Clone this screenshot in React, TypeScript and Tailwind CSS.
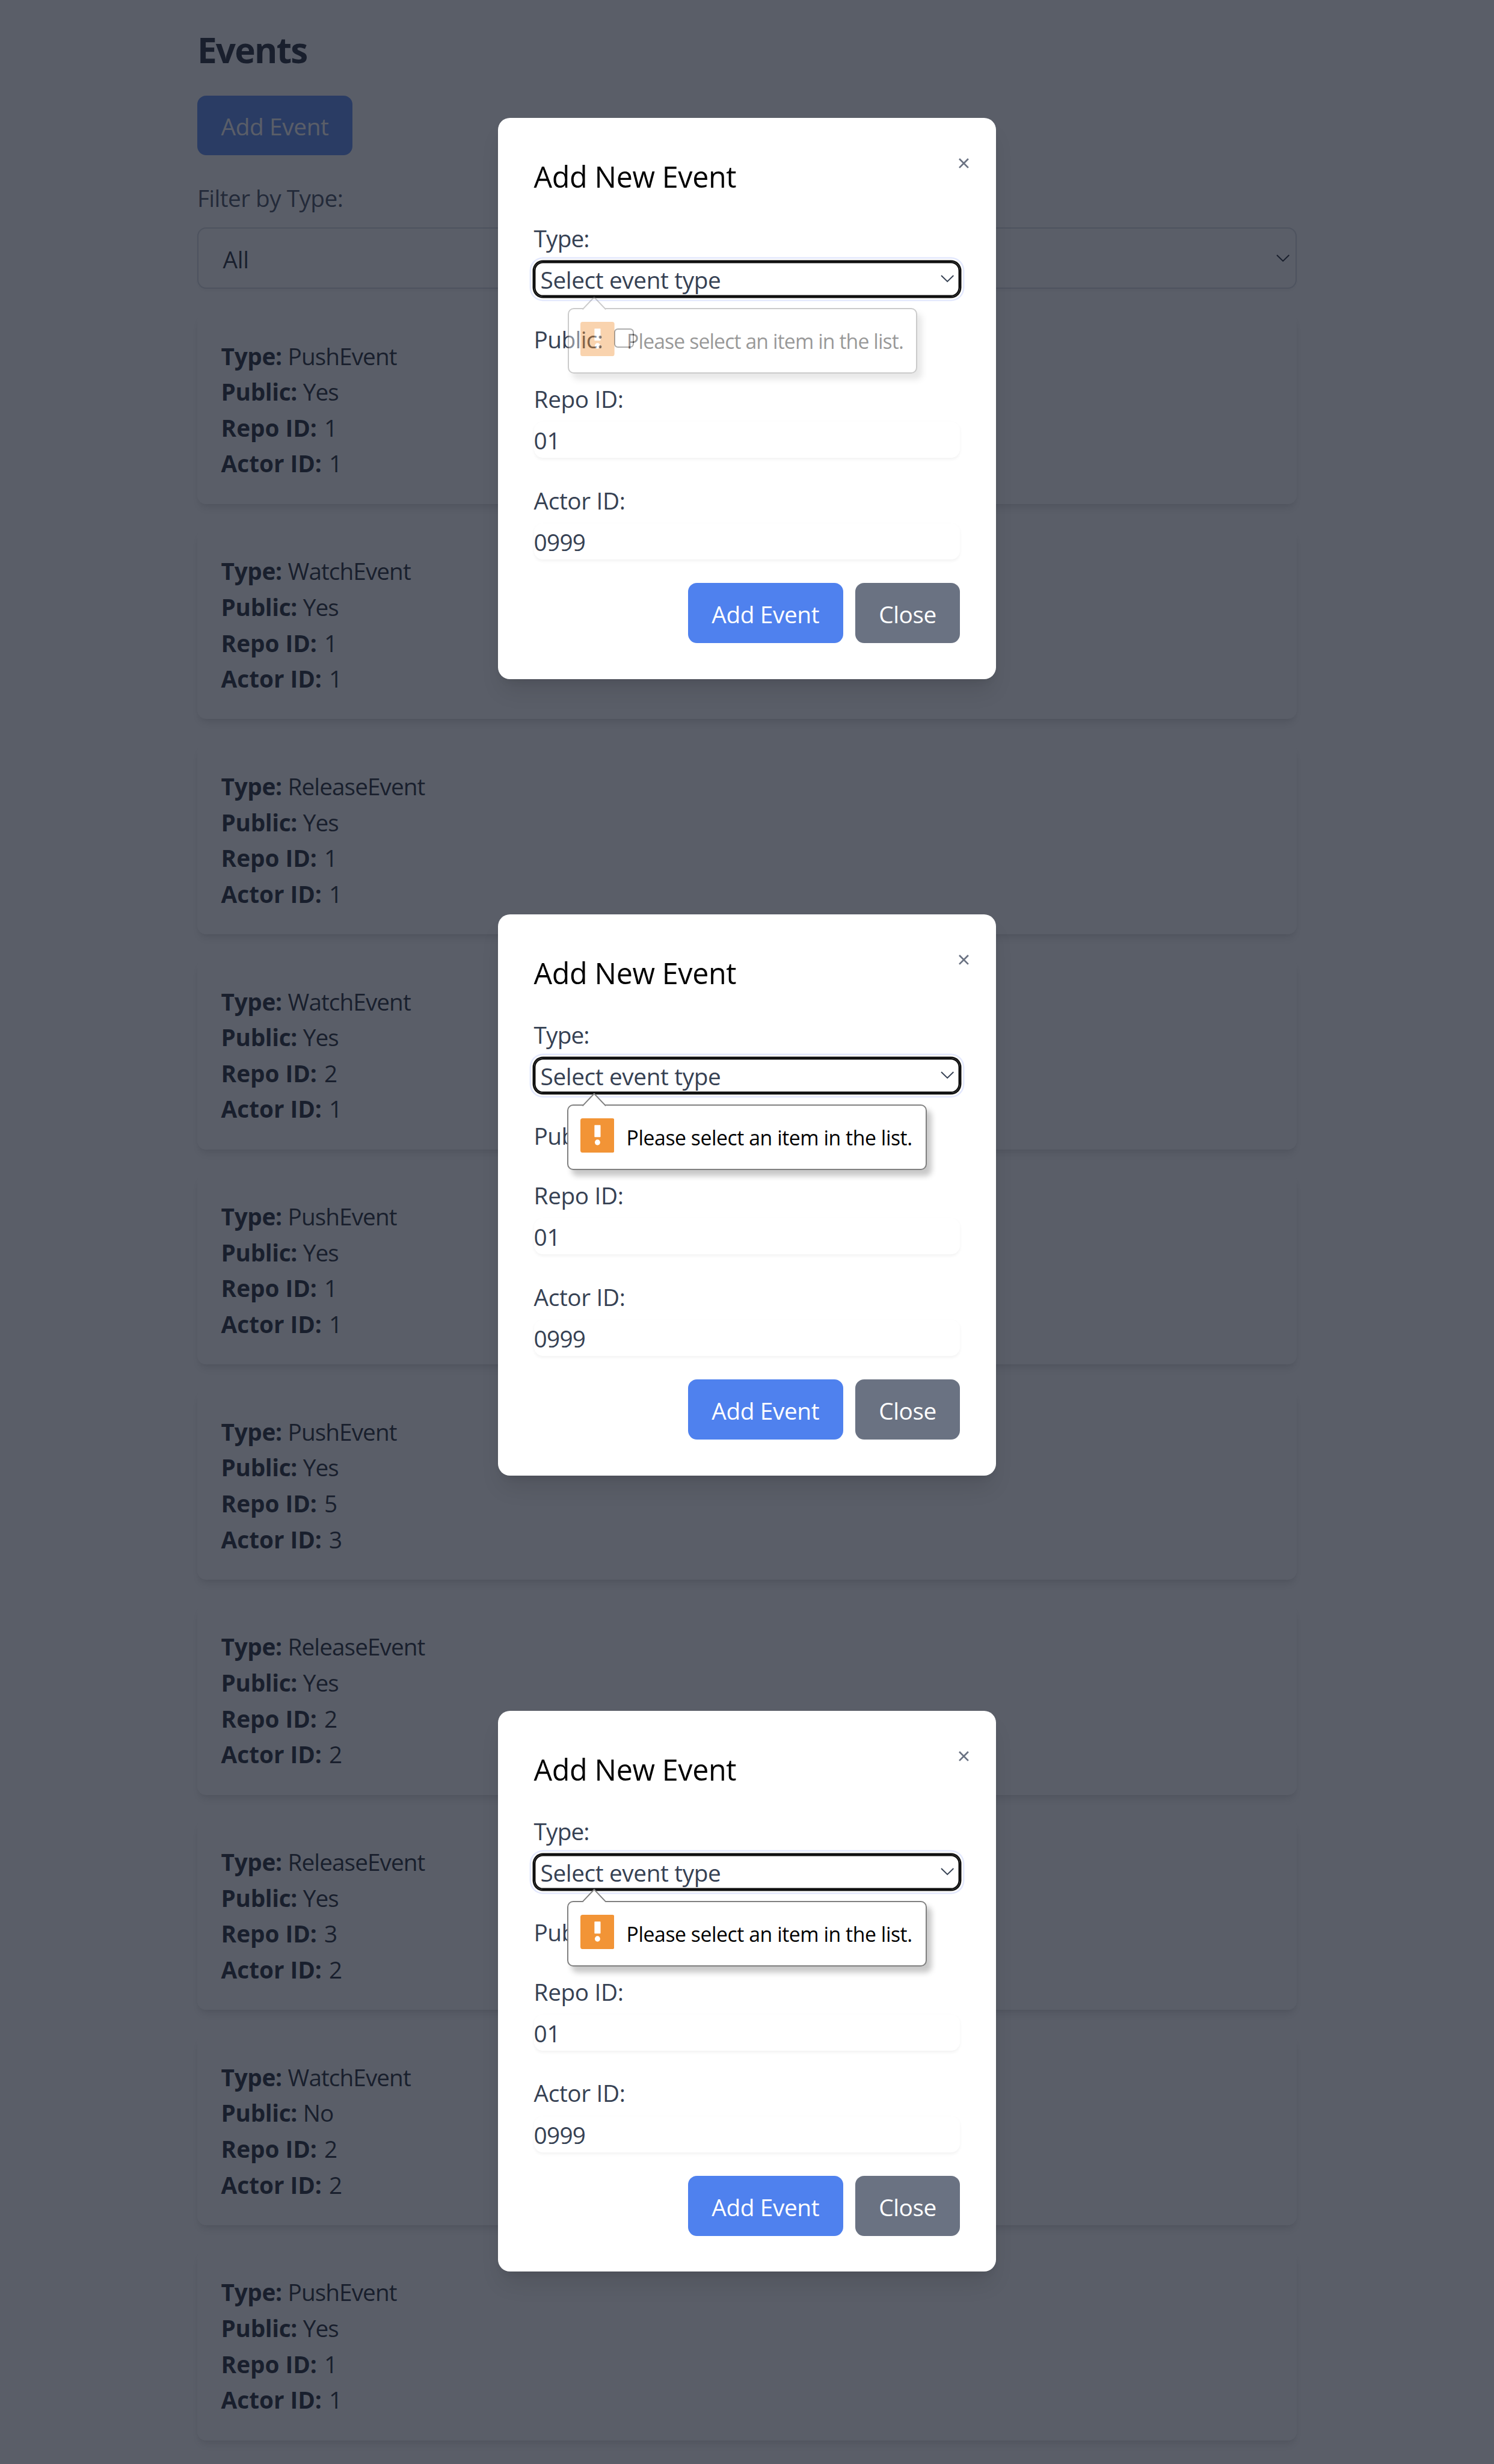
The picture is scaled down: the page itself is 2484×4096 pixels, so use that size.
type EventItem = { type: string; isPublic: boolean; repoId: number; actorId: number };

const events: EventItem[] = [
  { type: 'PushEvent', isPublic: true, repoId: 1, actorId: 1 },
  { type: 'WatchEvent', isPublic: true, repoId: 1, actorId: 1 },
  { type: 'ReleaseEvent', isPublic: true, repoId: 1, actorId: 1 },
  { type: 'WatchEvent', isPublic: true, repoId: 2, actorId: 1 },
  { type: 'PushEvent', isPublic: true, repoId: 1, actorId: 1 },
  { type: 'PushEvent', isPublic: true, repoId: 5, actorId: 3 },
  { type: 'ReleaseEvent', isPublic: true, repoId: 2, actorId: 2 },
  { type: 'ReleaseEvent', isPublic: true, repoId: 3, actorId: 2 },
  { type: 'WatchEvent', isPublic: false, repoId: 2, actorId: 2 },
  { type: 'PushEvent', isPublic: true, repoId: 1, actorId: 1 },
];

function Chevron() {
  return (
    <svg className="h-[5px] w-[9px] shrink-0" viewBox="0 0 9 5" fill="none">
      <path d="M0.4 0.4L4.5 4.4L8.6 0.4" stroke="currentColor" strokeWidth="0.8" />
    </svg>
  );
}

function Row({ label, value }: { label: string; value: string | number }) {
  const numeric = typeof value === 'number';
  return (
    <p className="h-6 leading-[25.8px] tracking-[-0.38px]">
      <strong className={numeric ? 'mr-[1.2px] font-bold tracking-[-0.02px]' : 'mr-[0.3px] font-bold tracking-[-0.15px]'}>
        {label}:
      </strong>{' '}
      {value}
    </p>
  );
}

function EventCard({ event }: { event: EventItem }) {
  return (
    <li className="rounded-md bg-white p-4 shadow-md">
      <Row label="Type" value={event.type} />
      <Row label="Public" value={event.isPublic ? 'Yes' : 'No'} />
      <Row label="Repo ID" value={event.repoId} />
      <Row label="Actor ID" value={event.actorId} />
    </li>
  );
}

// Validation bubble; `fading` is the half-transparent state with slightly tighter text.
function Bubble({ fading }: { fading: boolean }) {
  return (
    <div
      className={
        fading
          ? 'absolute left-[46.6px] top-[127.3px] w-[234px] opacity-40'
          : 'absolute left-[46.4px] top-[127.3px] w-[240.7px]'
      }
    >
      <div className="flex h-[43.6px] items-start rounded-[4px] border border-[#808080] bg-white pl-[7.8px] pt-[8.2px] shadow-[3px_4px_4px_rgba(0,0,0,0.22)]">
        <svg className="h-[23px] w-[22.8px] shrink-0" viewBox="0 0 22.8 23">
          <rect width="22.8" height="23" rx="1.5" fill="#f29436" />
          <rect x="9.4" y="4.5" width="4.1" height="8.1" rx="0.3" fill="#fff" />
          <ellipse cx="11.45" cy="16.1" rx="1.8" ry="1.9" fill="#fff" />
        </svg>
        <span
          className={
            fading
              ? 'ml-[8.2px] mt-[1.3px] whitespace-nowrap text-[13.6px] leading-[24px] tracking-[-0.36px] text-black'
              : 'ml-[8.2px] mt-[1.3px] whitespace-nowrap text-[13.6px] leading-[24px] tracking-[-0.18px] text-black'
          }
        >
          Please select an item in the list.
        </span>
      </div>
      <svg className="absolute left-[9.8px] top-[-8px] h-[9.2px] w-4" viewBox="0 0 16 9.2">
        <path d="M0 9.2L8 0.3L16 9.2Z" fill="#fff" />
        <path d="M0.2 8.6L8 0.4L15.8 8.6" fill="none" stroke="#808080" strokeWidth="0.8" />
      </svg>
    </div>
  );
}

function Modal({ fading = false }: { fading?: boolean }) {
  return (
    <div className="relative h-[375.33px] w-1/3 rounded-lg bg-white p-6 text-gray-700 shadow-lg">
      <span className="absolute right-4 top-4 flex h-6 w-[11px] items-center justify-center text-gray-500">
        <svg className="mt-[4.4px] size-[6.8px]" viewBox="0 0 6.8 6.8">
          <path d="M0.4 0.4L6.4 6.4M6.4 0.4L0.4 6.4" stroke="currentColor" strokeWidth="1.1" />
        </svg>
      </span>
      <h2 className="mb-4 h-7 whitespace-nowrap text-[19.5px] leading-[30.2px] text-black">Add New Event</h2>
      <div className="mb-4">
        <p className="h-6 leading-[25.6px] tracking-[-0.35px]">Type:</p>
        <div className="mt-1 flex h-[23.33px] items-center justify-between rounded-md bg-white pl-[4.4px] pr-[4.2px] shadow-[inset_0_0_0_1px_#101010,0_0_0_1px_#101010,0_0_0_2px_#ffffff,0_0_0_3px_#e3e8fd]">
          <span className="pt-[1.8px] leading-[24px]">Select event type</span>
          <Chevron />
        </div>
      </div>
      <div className="mb-4 flex h-6 items-center">
        <p className="h-6 w-[53.9px] leading-[26px] tracking-[-0.25px]">Public:</p>
        <span className="size-[13px] rounded-[2.5px] border border-[#767676] bg-white" />
      </div>
      <div className="mb-4">
        <p className="h-6 leading-[25.4px]">Repo ID:</p>
        <div className="mt-1 h-6 rounded-md leading-[25.6px] shadow-xs">01</div>
      </div>
      <div className="mb-4">
        <p className="h-6 leading-[25.4px]">Actor ID:</p>
        <div className="mt-1 h-6 rounded-md leading-[25.6px] tracking-[-0.3px] shadow-xs">0999</div>
      </div>
      <div className="flex justify-end gap-2 text-white">
        <button className="h-10 w-[104px] whitespace-nowrap rounded-md bg-[#4f81ee] pt-[1.4px]">Add Event</button>
        <button className="h-10 w-[70.3px] rounded-md bg-gray-500 pt-[1.4px]">Close</button>
      </div>
      <Bubble fading={fading} />
    </div>
  );
}

export default function App() {
  return (
    <div className="relative h-[1648.95px] w-[1000px] overflow-hidden bg-white font-['Open_Sans','Noto_Sans',sans-serif] text-[15.6px] tracking-[-0.15px] text-gray-900 [zoom:2.484]">
      <main className="mx-auto max-w-3xl p-4">
        <h1 className="mb-4 h-8 text-[23.5px] font-bold leading-[34.6px] tracking-[-0.7px]">Events</h1>
        <button className="mb-4 block h-10 w-[104px] whitespace-nowrap rounded-md bg-[#4f81ee] pt-[1.4px] text-white">
          Add Event
        </button>
        <p className="h-6 leading-[25.6px] tracking-[-0.22px] text-gray-700">Filter by Type:</p>
        <div className="mt-2 mb-4 flex h-[41.33px] items-center justify-between rounded-md border border-gray-300 bg-white pl-[16.4px] pr-1 shadow-xs">
          <span className="pt-[1.4px]">All</span>
          <Chevron />
        </div>
        <ul className="flex flex-col gap-4">
          {events.map((event, i) => (
            <EventCard key={i} event={event} />
          ))}
        </ul>
      </main>
      <div className="absolute inset-0 flex flex-col items-center gap-[157.67px] bg-[rgba(29,34,48,0.73)] pt-[79px]">
        <Modal fading />
        <Modal />
        <Modal />
      </div>
    </div>
  );
}
